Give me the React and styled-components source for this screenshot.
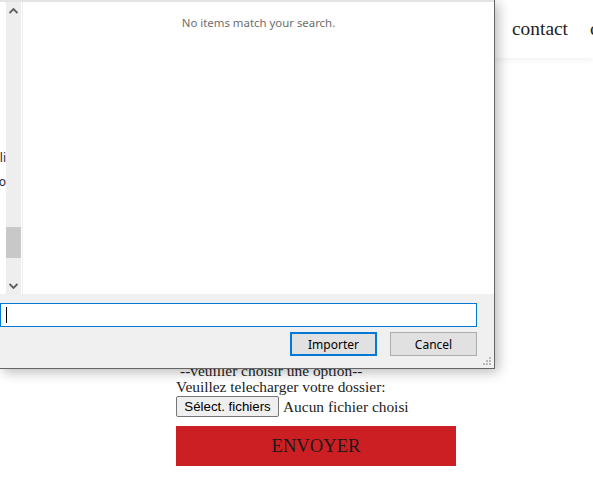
import React from "react";
import styled, { createGlobalStyle } from "styled-components";

const GlobalStyle = createGlobalStyle`
  html, body {
    margin: 0;
    padding: 0;
    background: #ffffff;
    overflow: hidden;
  }
`;

const Page = styled.div`
  position: relative;
  width: 593px;
  height: 484px;
  overflow: hidden;
  font-family: "Liberation Serif", "Times New Roman", serif;
  color: #222222;
`;

const Header = styled.header`
  height: 58px;
  display: flex;
  align-items: center;
  gap: 22px;
  padding-left: 512px;
  box-shadow: 0 2px 5px rgba(0, 0, 0, 0.06);
  white-space: nowrap;
`;

const NavLink = styled.span`
  font-size: 19.4px;
  color: #222222;
`;

const Form = styled.form`
  padding: 305px 0 0 176px;
  font-size: 15.4px;
  line-height: 16px;
`;

const OptionText = styled.div`
  padding-left: 4px;
`;

const Label = styled.div``;

const FileRow = styled.div`
  display: flex;
  align-items: center;
  gap: 4px;
  margin-top: 1px;
`;

const FileButton = styled.button`
  font-family: "Liberation Sans", Arial, sans-serif;
  font-size: 13.3px;
  height: 21px;
  width: 103px;
  padding: 0;
  border: 1px solid #767676;
  border-radius: 2px;
  background: #efefef;
  color: #000000;
`;

const SubmitButton = styled.button`
  display: block;
  margin-top: 9px;
  width: 280px;
  height: 40px;
  border: none;
  background: #cc1f24;
  color: #1a1a1a;
  font-family: "Liberation Serif", "Times New Roman", serif;
  font-size: 18.6px;
  padding: 0;
`;

/* file picker dialog, sits over the page */
const Dialog = styled.div`
  position: absolute;
  top: 0;
  left: 0;
  width: 494px;
  height: 368px;
  background: #f0f0f0;
  border-right: 1px solid #656565;
  border-bottom: 1px solid #656565;
  box-shadow: 3px 3px 12px rgba(0, 0, 0, 0.28);
  display: flex;
  flex-direction: column;
  font-family: "Noto Sans", "Open Sans", sans-serif;
  font-size: 12px;
  color: #000000;
`;

const Browser = styled.div`
  height: 292px;
  display: flex;
  background: #ffffff;
  border-top: 2px solid #e4e4e4;
`;

const NavPane = styled.div`
  width: 6px;
  overflow: hidden;
  display: flex;
  flex-direction: column;
  align-items: flex-end;
  padding-top: 147px;
  gap: 6px;
  color: #1e1e3c;
  line-height: 18px;
  white-space: nowrap;
`;

const Scrollbar = styled.div`
  width: 15px;
  background: #eeeeee;
  display: flex;
  flex-direction: column;
  align-items: center;
  justify-content: space-between;
  position: relative;
`;

const Arrow = styled.div`
  height: 17px;
  display: flex;
  align-items: center;
  justify-content: center;
`;

const Thumb = styled.div`
  position: absolute;
  left: 0;
  width: 15px;
  top: 225px;
  height: 31px;
  background: #c8c8c8;
`;

const Divider = styled.div`
  width: 1px;
  margin-left: 1px;
  background: #f0f0f0;
`;

const ListArea = styled.div`
  flex: 1;
  padding-top: 13px;
  text-align: center;
  color: #6d6d6d;
  font-size: 11.4px;
`;

const Footer = styled.div`
  flex: 1;
  position: relative;
  padding: 9px 17px 0 0;
  display: flex;
  flex-direction: column;
  gap: 5px;
`;

const NameInput = styled.div`
  height: 22px;
  border: 1px solid #0078d7;
  background: #ffffff;
  display: flex;
  align-items: center;
  padding-left: 5px;
`;

const Caret = styled.div`
  width: 1px;
  height: 16px;
  background: #000000;
`;

const Actions = styled.div`
  display: flex;
  justify-content: flex-end;
  gap: 13px;
`;

const DialogButton = styled.button`
  width: 87px;
  height: 24px;
  padding: 0;
  font-family: "Noto Sans", "Open Sans", sans-serif;
  font-size: 12px;
  color: #000000;
  background: #e1e1e1;
  border: ${(p) => (p.$primary ? "2px solid #0078d7" : "1px solid #adadad")};
`;

const Grip = styled.svg`
  position: absolute;
  right: 2px;
  bottom: 2px;
`;

const Chevron = ({ up }) => (
  <svg width="9" height="6" viewBox="0 0 9 6">
    <path
      d={up ? "M0.5 5 L4.5 1 L8.5 5" : "M0.5 1 L4.5 5 L8.5 1"}
      fill="none"
      stroke="#5d5d5d"
      strokeWidth="1.8"
    />
  </svg>
);

const App = () => {
  return (
    <Page>
      <GlobalStyle />
      <Header>
        <NavLink>contact</NavLink>
        <NavLink>connexion</NavLink>
      </Header>
      <Form>
        <OptionText>--veuiller choisir une option--</OptionText>
        <Label>Veuillez telecharger votre dossier:</Label>
        <FileRow>
          <FileButton type="button">Sélect. fichiers</FileButton>
          <span>Aucun fichier choisi</span>
        </FileRow>
        <SubmitButton type="button">ENVOYER</SubmitButton>
      </Form>

      <Dialog>
        <Browser>
          <NavPane>
            <span>Bibli</span>
            <span>Vidéo</span>
          </NavPane>
          <Scrollbar>
            <Arrow>
              <Chevron up />
            </Arrow>
            <Thumb />
            <Arrow>
              <Chevron />
            </Arrow>
          </Scrollbar>
          <Divider />
          <ListArea>No items match your search.</ListArea>
        </Browser>
        <Footer>
          <NameInput>
            <Caret />
          </NameInput>
          <Actions>
            <DialogButton $primary type="button">
              Importer
            </DialogButton>
            <DialogButton type="button">Cancel</DialogButton>
          </Actions>
          <Grip width="10" height="10" viewBox="0 0 10 10">
            <rect x="7" y="1" width="2" height="2" fill="#b9b9b9" />
            <rect x="4" y="4" width="2" height="2" fill="#b9b9b9" />
            <rect x="7" y="4" width="2" height="2" fill="#b9b9b9" />
            <rect x="1" y="7" width="2" height="2" fill="#b9b9b9" />
            <rect x="4" y="7" width="2" height="2" fill="#b9b9b9" />
            <rect x="7" y="7" width="2" height="2" fill="#b9b9b9" />
          </Grip>
        </Footer>
      </Dialog>
    </Page>
  );
};

export default App;
